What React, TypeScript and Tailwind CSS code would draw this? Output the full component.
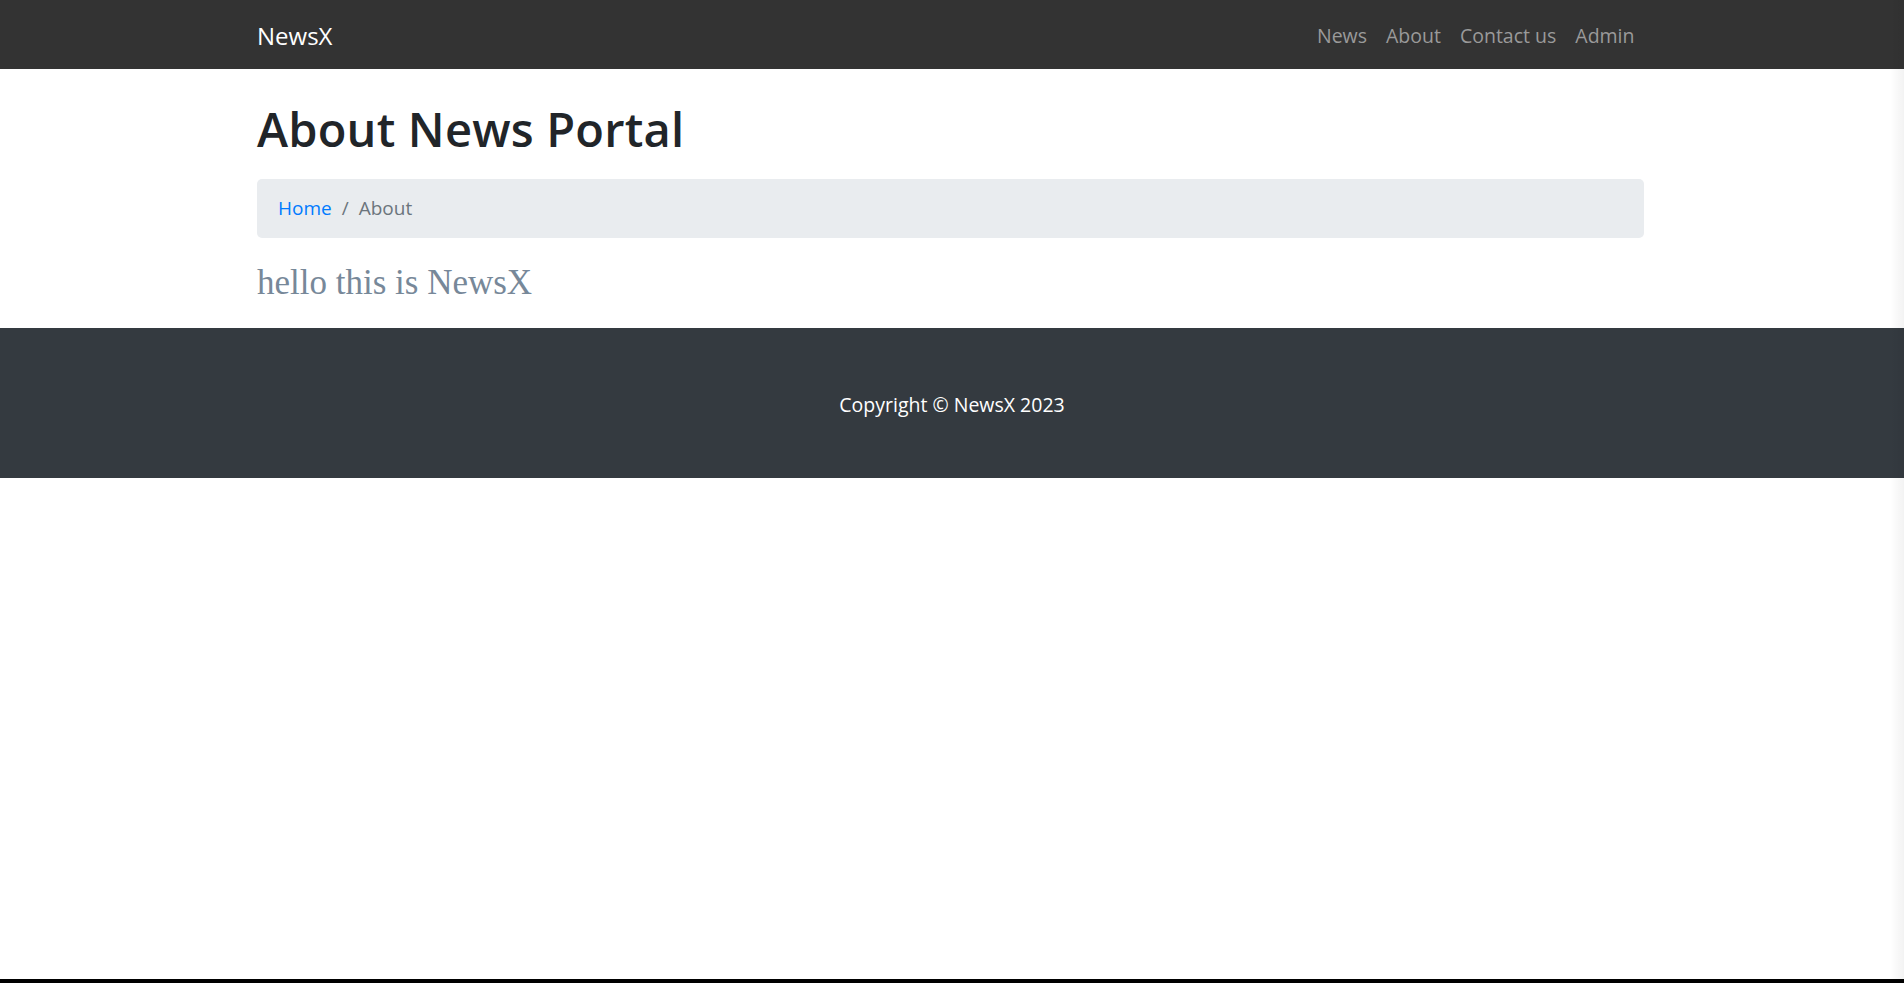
export default function App() {
  const links = ['News', 'About', 'Contact us', 'Admin']

  return (
    <div
      className="relative min-h-[983px] flex flex-col bg-white border-b-[4px] border-black"
      style={{ fontFamily: '"Open Sans", "Noto Sans", sans-serif' }}
    >
      <nav className="h-[69px] bg-[#333333] flex items-center">
        <div className="ml-[257px] w-[1387px] pt-[2px] flex items-center justify-between">
          <a href="#" className="text-white text-[24px]">NewsX</a>
          <ul className="flex items-center">
            {links.map((l) => (
              <li key={l}>
                <a href="#" className="block px-[9.5px] text-[19.5px] text-[#9a9a9a]">{l}</a>
              </li>
            ))}
          </ul>
        </div>
      </nav>

      <main className="ml-[257px] w-[1387px]">
        <h1 className="mt-[31px] mb-[20px] text-[47px] leading-[59px] font-semibold tracking-[0.2px] text-[#212529]">
          About News Portal
        </h1>

        <ol className="flex items-center h-[59px] px-[21px] rounded-[5px] bg-[#e9ecef] text-[19px]">
          <li><a href="#" className="text-[#007bff]">Home</a></li>
          <li className="px-[10px] text-[#6c757d]">/</li>
          <li className="text-[#6c757d]">About</li>
        </ol>

        <p
          className="mt-[20px] mb-[20px] text-[35px] leading-[50px] text-[#778899]"
          style={{ fontFamily: '"Liberation Serif", "DejaVu Serif", serif' }}
        >
          hello this is NewsX
        </p>
      </main>

      <footer className="h-[150px] bg-[#343a40] flex items-center justify-center">
        <p className="pt-[3px] text-white text-[19.5px]">Copyright © NewsX 2023</p>
      </footer>

      <div className="flex-1" />

      <div className="pointer-events-none absolute top-0 right-0 bottom-0 w-[14px] bg-gradient-to-r from-transparent to-black/5" />
    </div>
  )
}
